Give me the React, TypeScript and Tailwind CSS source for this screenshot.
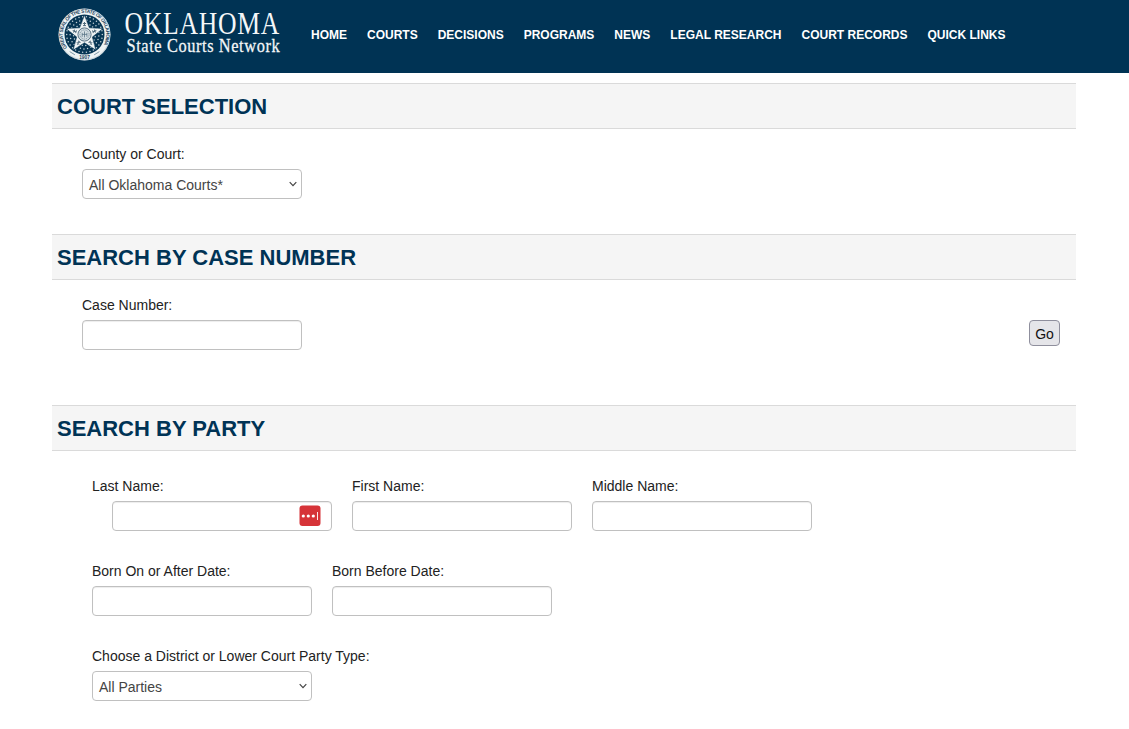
import type { ReactNode } from 'react';

const NAV_ITEMS = ['HOME', 'COURTS', 'DECISIONS', 'PROGRAMS', 'NEWS', 'LEGAL RESEARCH', 'COURT RECORDS', 'QUICK LINKS'];

function starPoints(cx: number, cy: number, outer: number, inner: number) {
  return Array.from({ length: 10 }, (_, i) => {
    const r = i % 2 === 0 ? outer : inner;
    const a = (Math.PI / 5) * i - Math.PI / 2;
    return `${(cx + r * Math.cos(a)).toFixed(2)},${(cy + r * Math.sin(a)).toFixed(2)}`;
  }).join(' ');
}

const DOTS = [17.8, 14.4, 11].flatMap((r, ring) =>
  Array.from({ length: 30 - ring * 5 }, (_, i) => {
    const a = (2 * Math.PI * i) / (30 - ring * 5) + ring * 0.1;
    return { x: 26.5 + r * Math.cos(a), y: 26.5 + r * Math.sin(a) };
  }),
);

function Seal() {
  return (
    <svg className="h-[53px] w-[53px] shrink-0" viewBox="0 0 53 53" role="img" aria-label="Great Seal of the State of Oklahoma">
      <defs>
        <path id="seal-arc" d="M9.2 39.6 A21.7 21.7 0 1 1 43.8 39.6" />
      </defs>
      <circle cx="26.5" cy="26.5" r="26" fill="#eef3f4" />
      <circle cx="26.5" cy="26.5" r="25.4" fill="none" stroke="#9fb2bc" strokeWidth=".5" />
      <circle cx="26.5" cy="26.5" r="20" fill="#063553" />
      {DOTS.map((d, i) => (
        <circle key={i} cx={d.x} cy={d.y} r=".75" fill="#c3d0d7" />
      ))}
      <polygon points={starPoints(26.5, 26.5, 19.3, 8.2)} fill="#f1f5f5" stroke="#063553" strokeWidth=".5" />
      {[0, 72, 144, 216, 288].map((a) => (
        <g key={a} transform={`rotate(${a} 26.5 26.5)`}>
          <path d="M24.9 15.5h3.2M26.5 14v4M25 17.6h3" fill="none" stroke="#526d7e" strokeWidth="1" />
        </g>
      ))}
      <circle cx="26.5" cy="26.5" r="6.6" fill="#d5dfe3" stroke="#36566b" strokeWidth=".8" />
      <circle cx="26.5" cy="26.5" r="4.6" fill="none" stroke="#6d8797" strokeWidth=".8" strokeDasharray="1.4 .8" />
      <path d="M24.2 28.8v-4m2.3 4.6v-6m2.4 5.4v-4M24 26.4h5" stroke="#587486" strokeWidth=".8" />
      <text fill="#1c435d" fontFamily="Liberation Sans, sans-serif" fontSize="4.9" fontWeight="700">
        <textPath href="#seal-arc" textLength="92" lengthAdjust="spacing">GREAT SEAL OF THE STATE OF OKLAHOMA</textPath>
      </text>
      <path d="M11.7 43.6l5.2 3.2M36.2 46.8l5.2-3.2" stroke="#7f98a6" strokeWidth="1" />
      <text x="26.5" y="50.8" textAnchor="middle" fill="#1c435d" fontFamily="Liberation Sans, sans-serif" fontSize="4.8" fontWeight="700">1907</text>
    </svg>
  );
}

function Logo() {
  return (
    <div className="ml-[58px] mt-2 flex">
      <Seal />
      <svg className="ml-[9px] h-[53px] w-[166px] overflow-visible" viewBox="0 0 166 53" fill="#f4f7f8" fontFamily="Liberation Serif, serif">
        <text transform="translate(4.5 25.8) scale(.79 1)" fontSize="32.5" textLength="196" lengthAdjust="spacing">OKLAHOMA</text>
        <text transform="translate(6.5 44.4) scale(.92 1)" fontSize="17.8" textLength="166.5" lengthAdjust="spacing" stroke="#f4f7f8" strokeWidth=".25">State Courts Network</text>
      </svg>
    </div>
  );
}

function SectionTitle({ children }: { children: ReactNode }) {
  return (
    <h2 className="h-[46px] border-y border-[#dadada] bg-[#f5f5f5] pl-[5px] text-[22px] leading-[46px] font-bold text-[#003355]">
      {children}
    </h2>
  );
}

function Field({ label, children }: { label: string; children: ReactNode }) {
  return (
    <label className="flex flex-col whitespace-nowrap">
      <span className="mb-[5px] h-5 leading-5">{label}</span>
      {children}
    </label>
  );
}

function TextInput() {
  return (
    <input
      type="text"
      className="h-[30px] w-[220px] rounded border border-[#c0c0c0] bg-white px-1.5 shadow-[inset_0_1px_1px_rgba(0,0,0,0.075)] outline-none"
    />
  );
}

function Select({ value }: { value: string }) {
  return (
    <span className="flex h-[30px] w-[220px] items-center justify-between rounded border border-[#c0c0c0] bg-white pr-1 pl-1.5 text-[#444]">
      <span className="mt-0.5 leading-5">{value}</span>
      <svg className="h-2 w-2" viewBox="0 0 8 8" fill="none" stroke="#444" strokeWidth="1.2">
        <path d="M.7 2.2 4 5.6 7.3 2.2" />
      </svg>
    </span>
  );
}

function PasswordBadge() {
  return (
    <svg className="absolute top-1 right-[11px] h-[22px] w-[22px]" viewBox="0 0 22 22">
      <rect x=".5" y=".5" width="21" height="20.5" rx="3" fill="#d63338" />
      <circle cx="4.3" cy="11" r="1.6" fill="#fff" />
      <circle cx="9.3" cy="11" r="1.6" fill="#fff" />
      <circle cx="14.3" cy="11" r="1.6" fill="#fff" />
      <path d="M18.5 7v8" stroke="#fff" strokeWidth=".9" />
    </svg>
  );
}

export default function App() {
  return (
    <div className="h-[729px] w-[1129px] overflow-hidden bg-white font-['Liberation_Sans',Arial,sans-serif] text-sm text-[#222]">
      <header className="flex h-[73px] bg-[#003354]">
        <Logo />
        <nav className="ml-[25px] flex gap-5 pt-[26px] text-xs leading-[18px] font-bold whitespace-nowrap text-white">
          {NAV_ITEMS.map((item) => (
            <a key={item} href="#">{item}</a>
          ))}
        </nav>
      </header>

      <main className="ml-[52px] w-[1024px] pt-[10px]">
        <section className="h-[151px]">
          <SectionTitle>COURT SELECTION</SectionTitle>
          <div className="flex pt-[15px] pl-[30px]">
            <Field label="County or Court:"><Select value="All Oklahoma Courts*" /></Field>
          </div>
        </section>

        <section className="h-[171px]">
          <SectionTitle>SEARCH BY CASE NUMBER</SectionTitle>
          <div className="flex items-start justify-between pt-[15px] pr-4 pl-[30px]">
            <Field label="Case Number:"><TextInput /></Field>
            <button className="mt-[25px] h-[26px] w-[31px] rounded border border-[#8f8f9d] bg-[#e5e5e9] pt-0.5 text-center text-[#111]">Go</button>
          </div>
        </section>

        <section>
          <SectionTitle>SEARCH BY PARTY</SectionTitle>
          <div className="flex flex-col gap-[30px] pt-[25px] pl-10">
            <div className="flex gap-5">
              <Field label="Last Name:">
                <span className="relative ml-5 flex">
                  <TextInput />
                  <PasswordBadge />
                </span>
              </Field>
              <Field label="First Name:"><TextInput /></Field>
              <Field label="Middle Name:"><TextInput /></Field>
            </div>
            <div className="flex gap-5">
              <Field label="Born On or After Date:"><TextInput /></Field>
              <Field label="Born Before Date:"><TextInput /></Field>
            </div>
            <div className="flex">
              <Field label="Choose a District or Lower Court Party Type:"><Select value="All Parties" /></Field>
            </div>
          </div>
        </section>
      </main>
    </div>
  );
}
